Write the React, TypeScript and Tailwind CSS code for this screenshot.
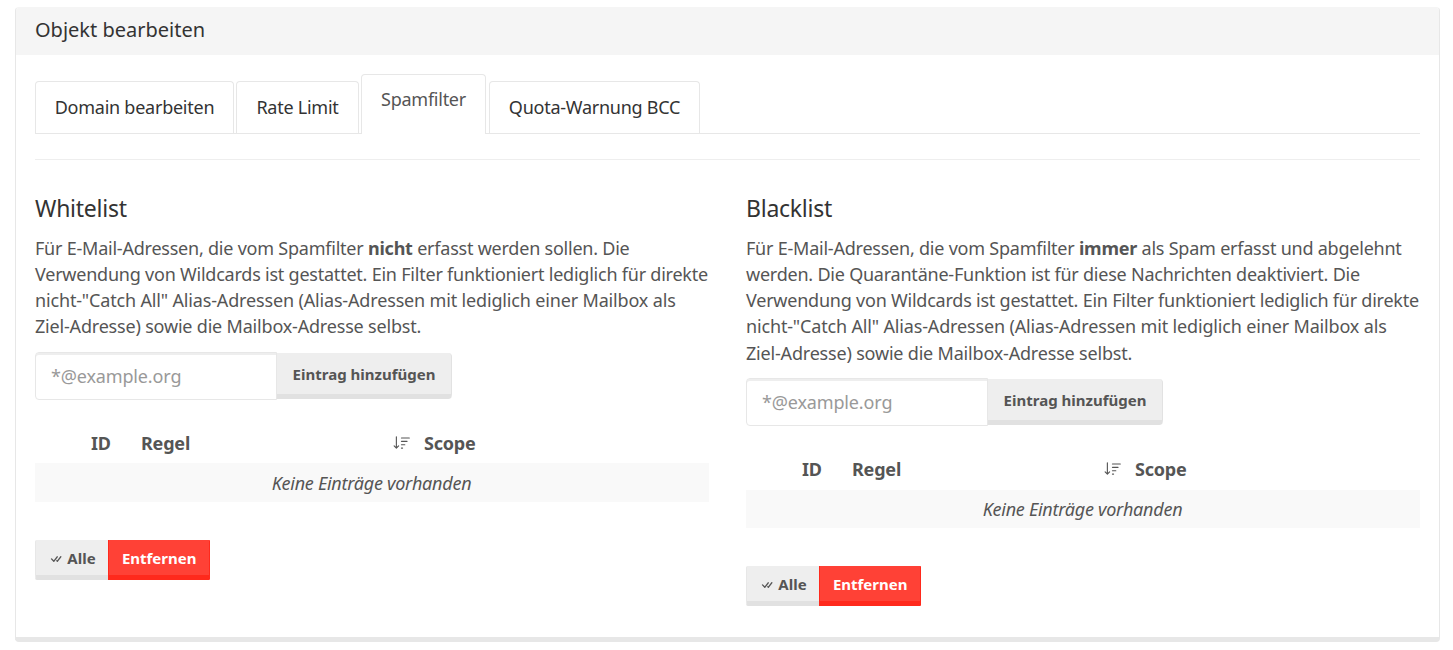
import React from 'react';

function SortIcon() {
  return (
    <svg width="18" height="18" viewBox="0 0 16 16" fill="#555" className="shrink-0">
      <path d="M3.5 2.5a.5.5 0 0 0-1 0v8.793l-1.146-1.147a.5.5 0 0 0-.708.708l2 1.999.007.007a.497.497 0 0 0 .7-.006l2-2a.5.5 0 0 0-.707-.708L3.5 11.293zm3.5 1a.5.5 0 0 1 .5-.5h7a.5.5 0 0 1 0 1h-7a.5.5 0 0 1-.5-.5M7.5 6a.5.5 0 0 0 0 1h5a.5.5 0 0 0 0-1zm0 3a.5.5 0 0 0 0 1h3a.5.5 0 0 0 0-1zm0 3a.5.5 0 0 0 0 1h1a.5.5 0 0 0 0-1z" />
    </svg>
  );
}

function CheckAllIcon() {
  return (
    <svg width="14" height="14" viewBox="0 0 16 16" fill="#555" className="mt-px shrink-0">
      <path d="M8.97 4.97a.75.75 0 0 1 1.07 1.05l-3.99 4.99a.75.75 0 0 1-1.08.02L2.324 8.384a.75.75 0 1 1 1.06-1.06l2.094 2.093L8.95 4.992zm-.92 5.14.92.92a.75.75 0 0 0 1.079-.02l3.992-4.99a.75.75 0 1 0-1.091-1.028L9.477 9.417l-.485-.486z" />
    </svg>
  );
}

function FilterList({ title, children }: { title: string; children: React.ReactNode }) {
  return (
    <section className="min-w-0 flex-1">
      <h4 className="h-[26px] text-[23px] leading-[26px] tracking-[-0.25px] text-[#333]">{title}</h4>
      <p className="mt-[14px] whitespace-nowrap text-[18px] leading-[26.15px] tracking-[-0.225px]">{children}</p>
      <div className="mt-[12px] flex h-[48px]">
        <input
          placeholder="*@example.org"
          className="h-[48px] w-[242px] rounded-l-[4px] border border-[#e7e7e7] px-[15px] text-[18px] tracking-[-0.15px] shadow-[inset_0_2px_0_rgba(0,0,0,0.066)] outline-none placeholder:text-[#999]"
        />
        <button className="mt-px h-[46px] w-[175px] rounded-r-[4px] border-r border-b-[5px] border-r-[#e2e2e2] border-b-[#e1e1e1] bg-[#eee] pt-[1.6px] text-[15px] font-bold">
          Eintrag hinzufügen
        </button>
      </div>
      <div className="mt-[24px] flex h-[39.8px] items-center pb-[0.8px] text-[18px] font-bold tracking-[-0.2px]">
        <span className="ml-[56px] w-[50px]">ID</span>
        <span className="w-[252px]">Regel</span>
        <SortIcon />
        <span className="ml-[13px]">Scope</span>
      </div>
      <div className="flex h-[38.2px] items-center justify-center bg-[#f9f9f9] pt-[2px] pr-px text-[18px] italic tracking-[-0.26px]">
        Keine Einträge vorhanden
      </div>
      <div className="mt-[38px] flex h-[40px] text-[15px] font-bold">
        <button className="flex w-[73px] items-center justify-center gap-[4px] rounded-l-[2px] border-b-[5px] border-l border-b-[#e1e1e1] border-l-[#e7e7e7] bg-[#eee] pt-[2px] pl-px">
          <CheckAllIcon />
          Alle
        </button>
        <button className="w-[102.4px] rounded-r-[1px] border-x border-b-[5px] border-[#ff291c] bg-[#ff4136] pt-[2px] text-white">Entfernen</button>
      </div>
    </section>
  );
}

export default function App() {
  const tab = 'flex items-center justify-center rounded-t-[4px] border border-b-0 border-[#e7e7e7] text-[18px] tracking-[-0.25px]';
  return (
    <div className="h-[650px] bg-white px-[15px] pt-[7px] font-['Noto_Sans',sans-serif] text-[#555]">
      <main className="h-[635px] w-[1425px] rounded-[4px] border border-b-[5px] border-[#e7e7e7] border-t-[#f5f5f5]">
        <header className="flex h-[47px] items-center rounded-t-[3px] bg-[#f5f5f5] pb-[4px] pl-[19px] text-[20px] text-[#333]">
          Objekt bearbeiten
        </header>
        <div className="px-[19px]">
          <nav className="mt-[19px] flex h-[60px] items-end gap-[2px] border-b border-[#e7e7e7] text-[#333]">
            <div className={tab + ' h-[52px] w-[199px]'}>Domain bearbeiten</div>
            <div className={tab + ' h-[52px] w-[123px]'}>Rate Limit</div>
            <div className={tab + ' -mb-px h-[60px] w-[125px] bg-white pb-[11px] text-[#555]'}>Spamfilter</div>
            <div className={tab + ' ml-px h-[52px] w-[211px]'}>Quota-Warnung BCC</div>
          </nav>
          <hr className="mt-[25px] border-[#eee]" />
          <div className="mt-[35px] flex gap-[37px]">
            <FilterList title="Whitelist">
              Für E-Mail-Adressen, die vom Spamfilter <b>nicht</b> erfasst werden sollen. Die<br />
              Verwendung von Wildcards ist gestattet. Ein Filter funktioniert lediglich für direkte<br />
              <span className="tracking-[-0.16px]">nicht-"Catch All" Alias-Adressen (Alias-Adressen mit lediglich einer Mailbox als</span><br />
              <span className="tracking-[-0.19px]">Ziel-Adresse) sowie die Mailbox-Adresse selbst.</span>
            </FilterList>
            <FilterList title="Blacklist">
              Für E-Mail-Adressen, die vom Spamfilter <b>immer</b> als Spam erfasst und abgelehnt<br />
              werden. Die Quarantäne-Funktion ist für diese Nachrichten deaktiviert. Die<br />
              Verwendung von Wildcards ist gestattet. Ein Filter funktioniert lediglich für direkte<br />
              <span className="tracking-[-0.16px]">nicht-"Catch All" Alias-Adressen (Alias-Adressen mit lediglich einer Mailbox als</span><br />
              <span className="tracking-[-0.19px]">Ziel-Adresse) sowie die Mailbox-Adresse selbst.</span>
            </FilterList>
          </div>
        </div>
      </main>
    </div>
  );
}
